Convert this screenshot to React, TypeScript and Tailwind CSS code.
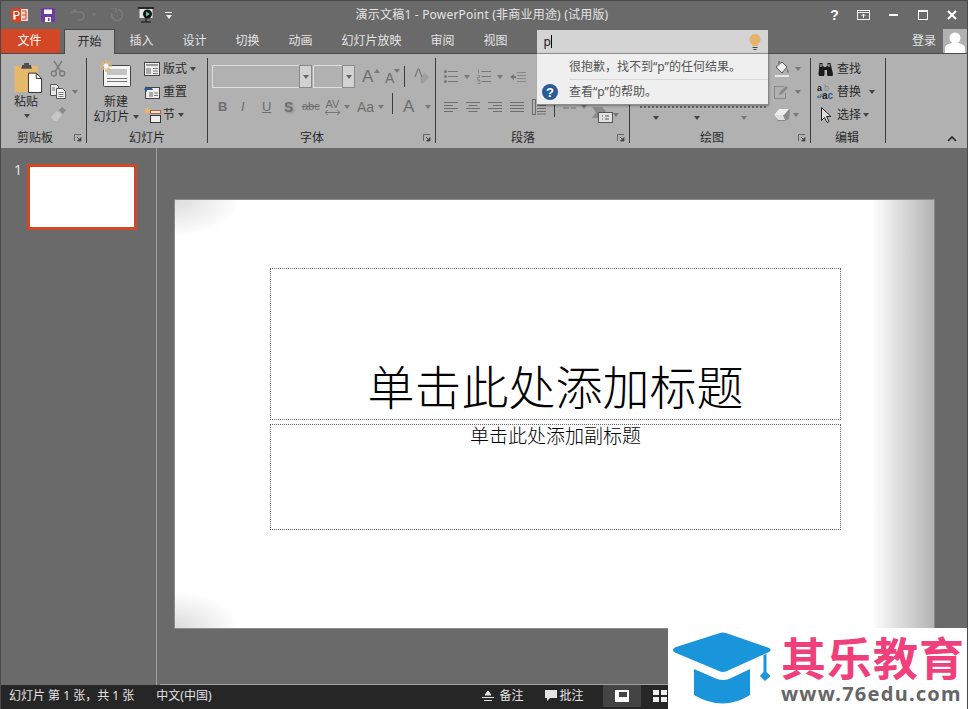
import type { ReactNode } from "react";

const uiFont = "font-['Noto_Sans','Noto_Sans_CJK_SC',sans-serif]";

function Arrow({ className = "", color = "border-t-[#444]" }: { className?: string; color?: string }) {
  return <span className={`inline-block h-0 w-0 border-x-[3.5px] border-t-[4px] border-x-transparent ${color} ${className}`} />;
}

function Launcher() {
  return (
    <svg width="8" height="8" viewBox="0 0 8 8" className="shrink-0">
      <path d="M0.5 7V0.5H7" fill="none" stroke="#666" />
      <path d="M3 3l3 3M7 3.5V7H3.5z" fill="#444" stroke="#444" strokeWidth="0.8" />
    </svg>
  );
}

function Sep({ className = "h-[21px]" }: { className?: string }) {
  return <span className={`inline-block w-px bg-[#3c3c3c] ${className}`} />;
}

function Group({
  width,
  label,
  labelClass = "",
  launcher = false,
  children,
}: {
  width: string;
  label: string;
  labelClass?: string;
  launcher?: boolean;
  children: ReactNode;
}) {
  return (
    <div className={`flex shrink-0 flex-col ${width}`}>
      <div className="relative h-[76px]">{children}</div>
      <div className="flex h-[16px] items-center">
        <span className={`text-[12px] leading-none text-[#2a2a2a] ${labelClass}`}>{label}</span>
        {launcher && (
          <span className="ml-auto mr-[4px]">
            <Launcher />
          </span>
        )}
      </div>
    </div>
  );
}

function GroupSep() {
  return <div className="mt-[4px] h-[85px] w-px shrink-0 bg-[#3c3c3c]" />;
}

function AlignIcon({ kind }: { kind: "left" | "center" | "right" | "justify" }) {
  const rows =
    kind === "left"
      ? "M0 1.5h14M0 4.5h9M0 7.5h14M0 10.5h9"
      : kind === "center"
        ? "M0 1.5h14M2.5 4.5h9M0 7.5h14M2.5 10.5h9"
        : kind === "right"
          ? "M0 1.5h14M5 4.5h9M0 7.5h14M5 10.5h9"
          : "M0 1.5h14M0 4.5h14M0 7.5h14M0 10.5h14";
  return (
    <svg width="14" height="12" viewBox="0 0 14 12">
      <path d={rows} stroke="#6e6e6e" fill="none" />
    </svg>
  );
}

function ClipboardGroup() {
  return (
    <div className="flex h-full pl-[10px]">
      <div className="flex w-[30px] flex-col items-center">
        <svg width="30" height="31" viewBox="0 0 30 32" className="ml-[2px] mt-[8px] self-start">
          <path d="M1 4h24v27H1z" fill="#e5b96c" />
          <path d="M9 3h2V1h5v2h2l1 4H8z" fill="#4d4d4d" />
          <path d="M15.5 11.5h8l5.5 5.500v14.500H15.5z" fill="#fff" stroke="#333" />
          <path d="M23.5 11.5V17H29" fill="none" stroke="#333" />
        </svg>
        <span className="mt-[1px] text-[12px] leading-[16px] text-[#2a2a2a]">粘贴</span>
        <Arrow className="ml-[2px] mt-[4px]" />
      </div>
      <div className="ml-[9px] flex flex-col">
        <svg width="16" height="17" viewBox="0 0 16 17" className="mt-[6px]">
          <path d="M4 1l6.5 10M12 1L5.5 11" stroke="#7c7c7c" strokeWidth="1.4" fill="none" />
          <circle cx="3.8" cy="13.5" r="2.5" fill="none" stroke="#7c7c7c" strokeWidth="1.4" />
          <circle cx="12.2" cy="13.5" r="2.5" fill="none" stroke="#7c7c7c" strokeWidth="1.4" />
        </svg>
        <div className="mt-[7px] flex items-center">
          <svg width="16" height="15" viewBox="0 0 16 15">
            <path d="M0.5 0.5h6l2 2v9h-8z" fill="#e8e8e8" stroke="#555" />
            <path d="M6.5 4.5h6l3 3v7h-9z" fill="#f2f2f2" stroke="#555" />
            <path d="M8.5 8.5h5M8.5 10.5h5M8.5 12.5h5M2 4h3M2 6h3" stroke="#777" />
          </svg>
          <Arrow className="ml-[6px]" color="border-t-[#777]" />
        </div>
        <svg width="17" height="15" viewBox="0 0 17 15" className="mt-[8px]">
          <path d="M1 10l6-6 5 4-5 6H4z" fill="#c6c6c6" />
          <path d="M9 3l3-3 4 3-3 4z" fill="#8a8a8a" />
        </svg>
      </div>
    </div>
  );
}

function SmallRow({ icon, text, arrow = false }: { icon: ReactNode; text: string; arrow?: boolean }) {
  return (
    <div className="flex h-[23px] items-center">
      <span className="flex w-[21px] shrink-0 pl-[2px]">{icon}</span>
      <span className="text-[12px] leading-none text-[#2a2a2a]">{text}</span>
      {arrow && <Arrow className="ml-[3px]" />}
    </div>
  );
}

function SlidesGroup() {
  return (
    <div className="flex h-full pl-[6px]">
      <div className="flex w-[46px] flex-col items-center">
        <svg width="32" height="28" viewBox="0 0 32 28" className="mt-[6px]">
          <rect x="3.5" y="5.5" width="27" height="21" rx="1" fill="#f5f5f5" stroke="#444" />
          <rect x="7" y="9" width="20" height="6" fill="#c4c4c4" />
          <path d="M7 18.5h20M7 21.5h20" stroke="#777" />
          <path d="M6 0v12M0 6h12M1.5 1.5l9 9M10.5 1.5l-9 9" stroke="#e5b96c" strokeWidth="1.5" />
          <circle cx="6" cy="6" r="2.5" fill="#f5f5f5" />
        </svg>
        <span className="mt-[6px] text-[12px] leading-[15px] text-[#2a2a2a]">新建</span>
        <span className="flex items-center whitespace-nowrap text-[12px] leading-[15px] text-[#2a2a2a]">
          幻灯片
          <Arrow className="ml-[3px]" />
        </span>
      </div>
      <div className="ml-[3px] flex flex-col pt-[3px]">
        <SmallRow
          arrow
          text="版式"
          icon={
            <svg width="16" height="14" viewBox="0 0 16 14">
              <rect x="0.5" y="0.5" width="15" height="13" fill="#eee" stroke="#444" />
              <path d="M2 3h12" stroke="#999" strokeWidth="2" />
              <path d="M2 6h5v6H2z" fill="#aaa" />
              <path d="M9 6.5h5M9 9h5M9 11.5h5" stroke="#777" />
            </svg>
          }
        />
        <SmallRow
          text="重置"
          icon={
            <svg width="16" height="14" viewBox="0 0 16 14">
              <rect x="1.5" y="2.5" width="14" height="11" fill="#eee" stroke="#444" />
              <path d="M5 7h4v5H5z" fill="#aaa" />
              <path d="M10 8h4M10 10.5h4" stroke="#777" />
              <path d="M0 4l3-3v2h5l1 2H3v2z" fill="#2b5c93" />
            </svg>
          }
        />
        <SmallRow
          arrow
          text="节"
          icon={
            <svg width="17" height="16" viewBox="0 0 17 16">
              <path d="M3.5 0v7M0 3.5h7M1 1l5 5M6 1L1 6" stroke="#e5b96c" />
              <rect x="6.5" y="3.5" width="10" height="3" fill="#eee" stroke="#c25a2a" />
              <rect x="6.5" y="8.5" width="10" height="7" fill="#eee" stroke="#333" />
            </svg>
          }
        />
      </div>
    </div>
  );
}

function Combo({ width }: { width: string }) {
  return (
    <div className={`flex h-[23px] border border-[#dedede] ${width}`}>
      <div className="flex-1" />
      <div className="-my-px -mr-px flex w-[13px] items-center justify-center border border-[#8a8a8a] bg-[#d2d2d2]">
        <Arrow color="border-t-[#666]" />
      </div>
    </div>
  );
}

function GlyphText({ children, className = "" }: { children: ReactNode; className?: string }) {
  return <span className={`font-['Liberation_Sans',sans-serif] leading-none text-[#6e6e6e] ${className}`}>{children}</span>;
}

function FontGroup() {
  return (
    <div className="flex h-full flex-col pl-[4px] pt-[11px]">
      <div className="flex h-[23px] items-center">
        <Combo width="w-[100px]" />
        <div className="ml-px">
          <Combo width="w-[42px]" />
        </div>
        <div className="relative ml-[7px] flex w-[23px]">
          <GlyphText className="text-[17px]">A</GlyphText>
          <Arrow className="ml-px mt-px rotate-180" color="border-t-[#777]" />
        </div>
        <div className="relative ml-0 flex w-[19px]">
          <GlyphText className="mt-[3px] text-[14px]">A</GlyphText>
          <Arrow className="mt-px" color="border-t-[#777]" />
        </div>
        <Sep />
        <svg width="15" height="17" viewBox="0 0 15 17" className="ml-[9px]">
          <path d="M6 10L11 5l4 4-5 6H7z" fill="#9e9e9e" />
          <path d="M1 9l3-8h1l3 8" stroke="#777" strokeWidth="1.2" fill="none" />
        </svg>
      </div>
      <div className="mt-[7px] flex h-[23px] items-center">
        <GlyphText className="ml-[6px] w-[23px] text-[13px] font-bold">B</GlyphText>
        <GlyphText className="w-[21px] text-[13px] italic">I</GlyphText>
        <GlyphText className="w-[22px] text-[13px] underline">U</GlyphText>
        <GlyphText className="w-[18px] text-[14px] font-bold drop-shadow-[1px_1px_1px_#888]">S</GlyphText>
        <GlyphText className="w-[22px] text-[11px] line-through">abc</GlyphText>
        <span className="flex w-[17px] flex-col items-center">
          <GlyphText className="text-[11px]">AV</GlyphText>
          <svg width="15" height="5" viewBox="0 0 15 5">
            <path d="M0 2.5h15M3 0L0 2.5 3 5M12 0l3 2.5L12 5" stroke="#777" fill="none" />
          </svg>
        </span>
        <Arrow className="ml-[3px]" color="border-t-[#777]" />
        <GlyphText className="ml-[7px] w-[21px] text-[14px]">Aa</GlyphText>
        <Arrow color="border-t-[#777]" />
        <span className="ml-[8px]">
          <Sep />
        </span>
        <GlyphText className="ml-[10px] w-[20px] text-[17px]">A</GlyphText>
        <Arrow className="ml-[2px]" color="border-t-[#777]" />
      </div>
    </div>
  );
}

function ParagraphGroup() {
  return (
    <div className="flex h-full flex-col pl-[8px] pt-[11px]">
      <div className="flex h-[23px] items-center">
        <svg width="14" height="15" viewBox="0 0 14 15">
          <path d="M4 2.5h10M4 7.5h10M4 12.5h10" stroke="#777" />
          <circle cx="1.5" cy="2.5" r="1.5" fill="#777" />
          <circle cx="1.5" cy="7.5" r="1.5" fill="#777" />
          <circle cx="1.5" cy="12.5" r="1.5" fill="#777" />
        </svg>
        <Arrow className="ml-[6px]" color="border-t-[#777]" />
        <svg width="14" height="15" viewBox="0 0 14 15" className="ml-[7px]">
          <path d="M4.5 2.5h9.5M4.5 7.5h9.5M4.5 12.5h9.5" stroke="#777" />
          <path d="M1.5 0.5v4M0.5 6.5h2v2h-2v2h2M0.5 11.5h2.5v3H0.5" stroke="#777" fill="none" strokeWidth="0.7" />
        </svg>
        <Arrow className="ml-[6px]" color="border-t-[#777]" />
        <svg width="16" height="12" viewBox="0 0 16 12" className="ml-[7px]">
          <path d="M7 1.5h9M7 4.5h9M7 7.5h9M7 10.5h9" stroke="#888" />
          <path d="M0 6l4-3v2h2v2H4v2z" fill="#777" />
        </svg>
      </div>
      <div className="mt-[7px] flex h-[23px] items-center gap-[8px]">
        <AlignIcon kind="left" />
        <AlignIcon kind="center" />
        <AlignIcon kind="right" />
        <AlignIcon kind="justify" />
        <svg width="14" height="16" viewBox="0 0 14 16">
          <rect x="0.5" y="0.5" width="3" height="15" fill="none" stroke="#6e6e6e" />
          <path d="M5 3.5h9M5 6.5h9M5 9.5h9M5 12.5h9M5 15h9" stroke="#6e6e6e" />
        </svg>
        <Sep />
        <svg width="13" height="7" viewBox="0 0 13 7">
          <path d="M0 1h6M8 1h5M0 5h6M8 5h5" stroke="#6e6e6e" />
        </svg>
        <span className="-ml-[3px] flex">
          <Arrow color="border-t-[#777]" />
        </span>
        <svg width="21" height="16" viewBox="0 0 21 16" className="-ml-[3px] mt-[17px] shrink-0">
          <path d="M0 0h10l5 5.500-5 5.500H0l4-5.500z" fill="#8a8a8a" />
          <rect x="6.5" y="5.500" width="14" height="10" fill="#e2e2e2" stroke="#555" />
          <path d="M10 9h1M13 9h4M10 12h1M13 12h4" stroke="#555" />
        </svg>
        <span className="-ml-[8px] mt-[17px] flex">
          <Arrow color="border-t-[#777]" />
        </span>
      </div>
    </div>
  );
}

function DrawingGroup() {
  return (
    <div className="flex h-full">
      <div className="flex h-full w-[136px] flex-col pb-[10px] pl-[10px] pt-[52px]">
        <div className="h-[2px] w-[126px] border-t-2 border-dotted border-[#666]" />
        <div className="mt-auto flex pl-[13px]">
          <Arrow />
          <Arrow className="ml-[35px]" />
          <Arrow className="ml-[41px]" color="border-t-[#777]" />
        </div>
      </div>
      <div className="flex flex-col pl-[8px] pt-[3px]">
        <div className="flex h-[23px] items-center">
          <svg width="16" height="17" viewBox="0 0 16 17">
            <path d="M2 7l6-5 5 5-5 6z" fill="#eee" stroke="#555" />
            <path d="M5 4V1" stroke="#555" />
            <path d="M13 8c1 2 2 3 2 4s-2 1-2 0z" fill="#777" />
            <path d="M1 15h14v2H1z" fill="#e6e6e6" />
          </svg>
          <Arrow className="ml-[5px]" color="border-t-[#777]" />
        </div>
        <div className="flex h-[23px] items-center">
          <svg width="16" height="14" viewBox="0 0 16 14">
            <path d="M10 1.5H0.5v12h11V8" fill="none" stroke="#888" />
            <path d="M5 10l1-3 6-6 2 2-6 6z" fill="#888" />
          </svg>
          <Arrow className="ml-[5px]" color="border-t-[#777]" />
        </div>
        <div className="flex h-[23px] items-center">
          <svg width="16" height="14" viewBox="0 0 16 14">
            <path d="M0 7l5-6h10l1 1-1 9-4 2H4z" fill="#8a8a8a" />
            <path d="M0 7l5-6h10l-5 6H0z" fill="#eee" />
            <path d="M0 7h9l2 5H4z" fill="#dedede" />
          </svg>
          <Arrow className="ml-[3px]" color="border-t-[#777]" />
        </div>
      </div>
    </div>
  );
}

function EditGroup() {
  const row = "flex h-[23px] items-center text-[12px] leading-none text-[#2a2a2a]";
  return (
    <div className="flex h-full flex-col pl-[6px] pt-[3px]">
      <div className={row}>
        <svg width="16" height="14" viewBox="0 0 16 14">
          <path d="M2.500 1h3v3h1v1h3V4h1V1h3l2.500 11-.5 2h-5l-.5-2V8H7.500v4L7 14H2l-.5-2z" fill="#1c1c1c" />
          <path d="M3.500 2h1v3h-1zM11.500 2h1v3h-1z" fill="#ddd" />
        </svg>
        <span className="ml-[4px]">查找</span>
      </div>
      <div className={row}>
        <svg width="16" height="16" viewBox="0 0 16 16">
          <text x="0" y="7" fontSize="9" fontFamily="'Liberation Sans',sans-serif" fontWeight="700" fill="#222">
            a
          </text>
          <text x="7" y="7" fontSize="9" fontFamily="'Liberation Sans',sans-serif" fill="#888">
            b
          </text>
          <text x="5" y="15" fontSize="10" fontFamily="'Liberation Sans',sans-serif" fontWeight="700" fill="#222">
            a
          </text>
          <text x="10.500" y="15" fontSize="10" fontFamily="'Liberation Sans',sans-serif" fontWeight="700" fill="#2b5c93">
            c
          </text>
          <path d="M4 10v3H0.500M2 11.500L0.500 13 2 14.500" stroke="#2b5c93" fill="none" />
        </svg>
        <span className="ml-[4px]">替换</span>
        <Arrow className="ml-[8px]" />
      </div>
      <div className={row}>
        <svg width="11" height="16" viewBox="0 0 11 16" className="ml-[4px]">
          <path d="M0.5 0.5v13l3-3 2.5 5 2-1-2.5-5H10z" fill="#ddd" stroke="#222" />
        </svg>
        <span className="ml-[5px]">选择</span>
        <Arrow className="ml-[2px]" />
      </div>
    </div>
  );
}

function TitleBar() {
  return (
    <div className="grid h-[29px] grid-cols-[1fr_auto_1fr] items-center border-t border-[#4a4a4a]">
      <div className="flex items-center pl-[10px]">
        <svg width="17" height="16" viewBox="0 0 17 16">
          <path d="M0 2l10-2v16L0 14z" fill="#d24726" />
          <path d="M10 2h7v12h-7z" fill="#f3d9d0" />
          <path d="M3 4.5h3a2 2 0 010 4H4V12H3z" fill="none" stroke="#fff" strokeWidth="1.2" />
          <path d="M11 4h4v8h-4M11 8h4" stroke="#d24726" fill="none" />
        </svg>
        <svg width="14" height="14" viewBox="0 0 14 14" className="ml-[13px]">
          <rect width="14" height="14" fill="#6b3d9e" />
          <rect x="3" y="1.5" width="8" height="4.5" fill="#fff" />
          <rect x="4" y="9" width="6" height="5" fill="#fff" />
          <rect x="7" y="10" width="1.5" height="3" fill="#6b3d9e" />
        </svg>
        <svg width="18" height="12" viewBox="0 0 18 12" className="ml-[15px]">
          <path d="M1 4l4-3v2h5a4 4 0 010 8H7" fill="none" stroke="#7c7c7c" strokeWidth="1.6" />
        </svg>
        <Arrow className="ml-[3px]" color="border-t-[#777]" />
        <svg width="14" height="14" viewBox="0 0 14 14" className="ml-[13px]">
          <path d="M8 1.5A5.5 5.5 0 112 5" fill="none" stroke="#7c7c7c" strokeWidth="1.6" />
          <path d="M1 0h5v4" fill="none" stroke="#7c7c7c" strokeWidth="1.4" />
        </svg>
        <svg width="17" height="16" viewBox="0 0 17 16" className="ml-[14px]">
          <path d="M0 1h16" stroke="#111" strokeWidth="1.5" />
          <rect x="1.5" y="2" width="13" height="9" fill="#e6e6e6" />
          <circle cx="9.5" cy="7" r="4.5" fill="#111" />
          <path d="M8 4.5l4 2.5-4 2.5z" fill="#5bc0a0" />
          <path d="M3 15h10M8 11v4" stroke="#111" />
        </svg>
        <span className="ml-[10px] flex flex-col items-center gap-[2px]">
          <span className="h-px w-[7px] bg-[#eee]" />
          <Arrow color="border-t-[#eee]" />
        </span>
      </div>
      <div className="whitespace-nowrap pr-[4px] text-[12px] leading-none tracking-[0.2px] text-[#e4e4e4]">
        演示文稿1 - PowerPoint (非商业用途) (试用版)
      </div>
      <div className="flex items-center justify-end pr-[8px] text-white">
        <span className="w-[29px] text-center font-['Liberation_Sans',sans-serif] text-[14px] font-bold leading-none">?</span>
        <svg width="14" height="10" viewBox="0 0 14 10" className="ml-[8px] mr-[18px]">
          <rect x="0.5" y="0.5" width="12" height="9" fill="none" stroke="#eee" />
          <path d="M0.5 2.5h12" stroke="#eee" />
          <path d="M6.5 8V4M4.5 6l2-2 2 2" fill="none" stroke="#eee" />
        </svg>
        <span className="h-[2px] w-[9px] bg-white" />
        <span className="ml-[20px] h-[10px] w-[10px] border border-t-[2px] border-white" />
        <svg width="10" height="10" viewBox="0 0 10 10" className="ml-[19px] mr-[2px]">
          <path d="M1 1l8 8M9 1L1 9" stroke="#fff" strokeWidth="2" />
        </svg>
      </div>
    </div>
  );
}

function TabRow() {
  const tabs = ["插入", "设计", "切换", "动画", "幻灯片放映", "审阅", "视图"];
  return (
    <div className="flex h-[25px] items-stretch border-b border-[#4a4a4a]">
      <div className="flex w-[59px] items-center justify-center bg-[#d24726] pr-[2px] text-[12px] leading-none text-white">文件</div>
      <div className="-mb-px ml-[4px] flex w-[51px] items-center justify-center border-x border-t border-[#4a4a4a] bg-[#b1b1b1] text-[12px] leading-none text-[#2a2a2a]">
        开始
      </div>
      {tabs.map((t) => (
        <div key={t} className="flex items-center whitespace-nowrap px-[14.5px] text-[12px] leading-none text-[#e4e4e4]">
          {t}
        </div>
      ))}
      <div className="ml-[14.5px] mt-px flex h-[23px] w-[231px] items-center bg-[#d4d4d4] pl-[7px]">
        <span className="text-[12px] leading-none text-[#222]">p</span>
        <span className="h-[13px] w-px bg-black" />
        <svg width="12" height="16" viewBox="0 0 12 16" className="ml-auto mr-[7px]">
          <path d="M6 0a5.5 5.5 0 00-3.5 9.7L3.5 12h5l1-2.3A5.5 5.5 0 006 0z" fill="#e4b36c" />
          <path d="M3.500 13.500h5M4.500 15.500h3" stroke="#444" />
        </svg>
      </div>
      <div className="ml-auto flex items-center">
        <span className="text-[12px] leading-none text-[#e4e4e4]">登录</span>
        <div className="ml-[7px] flex h-[24px] w-[24px] items-end justify-center overflow-hidden bg-[#b1b1b1]">
          <svg width="20" height="22" viewBox="0 0 20 22">
            <circle cx="10" cy="7" r="5.500" fill="#fff" />
            <path d="M0 22v-5c0-3 4-4 6-5h8c2 1 6 2 6 5v5z" fill="#fff" />
          </svg>
        </div>
      </div>
    </div>
  );
}

function Ribbon() {
  return (
    <div className="relative flex h-[94px] items-start bg-[#b1b1b1]">
      <Group width="w-[85px]" label="剪贴板" labelClass="ml-[16px]" launcher>
        <ClipboardGroup />
      </Group>
      <GroupSep />
      <Group width="w-[120px]" label="幻灯片" labelClass="ml-[42px]">
        <SlidesGroup />
      </Group>
      <GroupSep />
      <Group width="w-[227px]" label="字体" labelClass="ml-[92px]" launcher>
        <FontGroup />
      </Group>
      <GroupSep />
      <Group width="w-[193px]" label="段落" labelClass="ml-[75px]" launcher>
        <ParagraphGroup />
      </Group>
      <GroupSep />
      <Group width="w-[180px]" label="绘图" labelClass="ml-[70px]" launcher>
        <DrawingGroup />
      </Group>
      <GroupSep />
      <Group width="w-[74px]" label="编辑" labelClass="ml-[24px]">
        <EditGroup />
      </Group>
      <GroupSep />
      <svg width="10" height="6" viewBox="0 0 10 6" className="ml-[61px] mt-[82px]">
        <path d="M1 5l4-4 4 4" fill="none" stroke="#222" strokeWidth="1.600" />
      </svg>
    </div>
  );
}

function SearchDropdown() {
  return (
    <div className="absolute left-[536px] top-[53px] z-10 w-[231px] border-y border-[#8c8c8c] bg-[#efefef] text-[12px] leading-none text-[#555] shadow-[1px_1px_2px_rgba(0,0,0,0.35)]">
      <div className="flex h-[25px] items-center pl-[32px]">很抱歉，找不到“p”的任何结果。</div>
      <div className="ml-[32px] h-px bg-[#d8d8d8]" />
      <div className="flex h-[24px] items-center pl-[5px]">
        <span className="flex h-[16px] w-[16px] items-center justify-center rounded-full bg-[#2b5c93] font-['Liberation_Sans',sans-serif] text-[13px] font-bold text-white">
          ?
        </span>
        <span className="ml-[11px]">查看“p”的帮助。</span>
      </div>
    </div>
  );
}

function Slide() {
  return (
    <div className="relative flex h-[430px] w-[761px] flex-col border border-[#8a8a8a] bg-white px-[95px] pt-[68px]">
      <div className="pointer-events-none absolute inset-y-0 right-0 w-[62px] bg-gradient-to-r from-white to-[#b4b4b4]" />
      <div className="pointer-events-none absolute left-0 top-0 h-[36px] w-[64px] bg-[radial-gradient(ellipse_at_top_left,#dcdcdc,#ffffff_72%)]" />
      <div className="pointer-events-none absolute bottom-0 left-0 h-[36px] w-[64px] bg-[radial-gradient(ellipse_at_bottom_left,#dcdcdc,#ffffff_72%)]" />
      <div className="relative flex h-[152px] w-[571px] items-end justify-center border border-dotted border-[#666] pb-[2px]">
        <span className="whitespace-nowrap text-[47px] font-light leading-[60px] text-black">单击此处添加标题</span>
      </div>
      <div className="relative mt-[4px] flex h-[106px] w-[571px] justify-center border border-dotted border-[#666]">
        <span className="whitespace-nowrap text-[19px] font-light leading-[22px] text-black">单击此处添加副标题</span>
      </div>
    </div>
  );
}

function StatusBar() {
  return (
    <div className="flex h-[24px] items-center bg-[#262626] pb-[2px] text-[12px] leading-none text-[#e4e4e4]">
      <span className="ml-[8px] whitespace-nowrap">幻灯片 第 1 张，共 1 张</span>
      <span className="ml-[22px] whitespace-nowrap">中文(中国)</span>
      <svg width="12" height="12" viewBox="0 0 12 12" className="ml-[270px]">
        <path d="M6 1L3 5h6zM0 7.500h12M2 10.500h8" fill="#e4e4e4" stroke="#e4e4e4" />
      </svg>
      <span className="ml-[6px] whitespace-nowrap">备注</span>
      <svg width="12" height="12" viewBox="0 0 12 12" className="ml-[21px]">
        <path d="M0 0h12v8H5l-3 3V8H0z" fill="#e4e4e4" />
      </svg>
      <span className="ml-[3px] whitespace-nowrap">批注</span>
      <div className="ml-[19px] flex h-[22px] w-[38px] items-center justify-center bg-[#444]">
        <svg width="14" height="12" viewBox="0 0 14 12">
          <rect width="14" height="12" fill="#fff" />
          <rect x="4" y="2" width="8" height="5" fill="#444" />
        </svg>
      </div>
      <svg width="14" height="12" viewBox="0 0 14 12" className="ml-[12px]">
        <path d="M0 0h6v5H0zM8 0h6v5H8zM0 7h6v5H0zM8 7h6v5H8z" fill="#eee" />
      </svg>
    </div>
  );
}

function BrandLogo() {
  return (
    <div className="absolute -right-px bottom-0 z-20 flex h-[81px] w-[300px] bg-white">
      <svg width="110" height="81" viewBox="0 0 110 81" className="absolute left-0 top-0">
        <path d="M5 22Q5 20 8 19L52 5Q55 4 58 5L101 20Q104 22 101 24L59 43Q55 45 51 43L8 25Q5 24 5 22Z" fill="#1a94db" />
        <path d="M26 41L49 51Q55 53 61 51L82 41V67Q55 84 26 67Z" fill="#1a94db" />
        <path d="M95.500 27V44L92 48L97 53L102.500 48L98.500 44V26Z" fill="#1a94db" />
      </svg>
      <div className="ml-[113px] flex flex-col">
        <span className="mt-[2px] whitespace-nowrap font-['Noto_Sans_CJK_SC',sans-serif] text-[45px] font-bold leading-[54px] tracking-[1px] text-[#f0407c]">
          其乐教育
        </span>
        <span className="whitespace-nowrap font-['Noto_Sans',sans-serif] text-[20px] font-bold leading-[20px] tracking-[1.250px] text-[#666]">
          www.76edu.com
        </span>
      </div>
    </div>
  );
}

export default function App() {
  return (
    <div className={`relative flex h-[709px] w-[968px] flex-col overflow-hidden border-x border-[#4a4a4a] bg-[#6a6a6a] ${uiFont}`}>
      <TitleBar />
      <TabRow />
      <Ribbon />
      <div className="flex min-h-0 flex-1">
        <div className="flex w-[156px] shrink-0 border-r border-[#a0a0a0] pl-[13px] pt-[16px]">
          <span className="-mt-[2px] w-[13px] text-[14px] leading-[16px] text-[#e4e4e4]">1</span>
          <div className="h-[66px] w-[110px] border-[3px] border-[#d24726] bg-white" />
        </div>
        <div className="flex min-w-0 flex-1 flex-col">
          <div className="flex-1 pl-[17px] pt-[51px]">
            <Slide />
          </div>
          <div className="ml-[3px] h-px bg-[#a0a0a0]" />
        </div>
      </div>
      <StatusBar />
      <SearchDropdown />
      <BrandLogo />
    </div>
  );
}
